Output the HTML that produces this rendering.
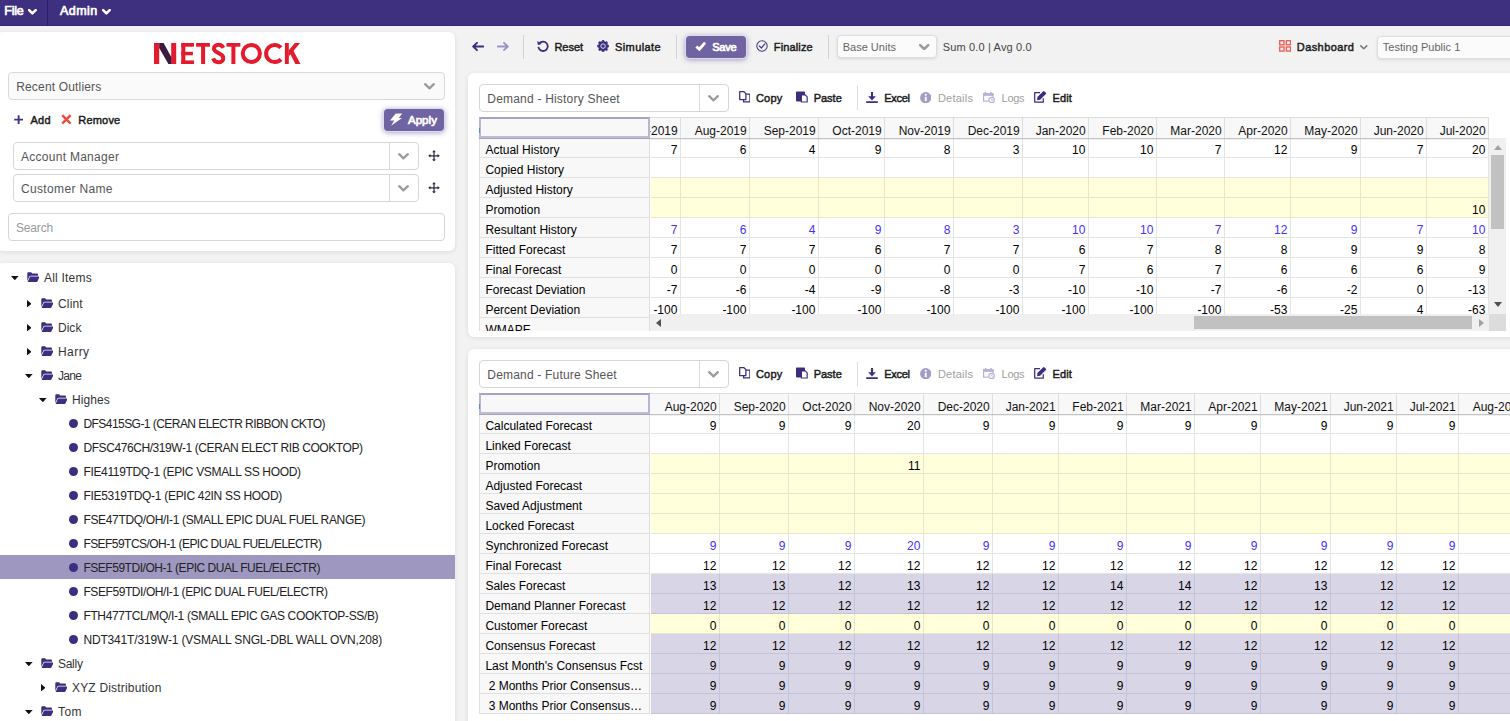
<!DOCTYPE html>
<html><head><meta charset="utf-8"><title>Netstock</title><style>
html,body{margin:0;padding:0}
body{width:1510px;height:721px;overflow:hidden;background:#f2f2f2;position:relative;font-family:"Liberation Sans",sans-serif;}
.b{position:absolute;box-sizing:border-box}
.t{position:absolute;white-space:pre;}
.panel{background:#fff;border-radius:6px;box-shadow:0 1px 5px rgba(0,0,0,0.09)}
.inp{background:#fff;border:1px solid #d6d6d6;border-radius:4px}
.btn{background:#6f63a2;border-radius:4px;box-shadow:0 0 0 1px #e0dde9,0 1px 5px 1px rgba(90,75,160,0.5)}
</style></head><body>
<div class="b " style="left:0px;top:0px;width:1510px;height:26px;background:#3e2f7f;border-bottom:1px solid #37287b"></div>
<div class="b " style="left:47px;top:0px;width:1px;height:26px;background:#2b1d68"></div>
<span id="t1" class="t " style="left:4.3px;top:1.97px;font-size:12.5px;line-height:19px;color:#fff;-webkit-text-stroke:0.7px #fff;letter-spacing:-0.219px;">File</span>
<span id="t2" class="t " style="left:60.1px;top:1.97px;font-size:12.5px;line-height:19px;color:#fff;-webkit-text-stroke:0.7px #fff;letter-spacing:0.441px;">Admin</span>
<svg class="b" style="left:28.2px;top:9px;" width="8.8" height="5.9" viewBox="0 0 10 6.5"><path d="M1.3 1.2 L5 4.9 L8.7 1.2" fill="none" stroke="#fff" stroke-width="2.9" stroke-linecap="round" stroke-linejoin="round"/></svg>
<svg class="b" style="left:102px;top:9px;" width="8.8" height="5.9" viewBox="0 0 10 6.5"><path d="M1.3 1.2 L5 4.9 L8.7 1.2" fill="none" stroke="#fff" stroke-width="2.9" stroke-linecap="round" stroke-linejoin="round"/></svg>
<div class="b panel" style="left:-3px;top:32px;width:458px;height:219px;"></div>
<svg class="b" style="left:150px;top:38px;" width="160" height="30" viewBox="150 38 160 30"><g fill="#e31b2d"><rect x="154" y="43" width="5.2" height="21"/><rect x="171.2" y="43" width="5" height="21"/><rect x="181.3" y="43" width="4" height="21"/><rect x="181.3" y="43" width="12.7" height="3.7"/><rect x="181.3" y="51.8" width="11.6" height="3.5"/><rect x="181.3" y="60.4" width="12.7" height="3.6"/><rect x="196.1" y="43" width="13.8" height="3.7"/><rect x="201.1" y="43" width="4" height="21"/><rect x="226.5" y="43" width="13.9" height="3.7"/><rect x="231.4" y="43" width="4" height="21"/><rect x="284.9" y="43" width="3.9" height="21"/><path d="M294.8 43 H300.1 L290.4 54.6 L288.6 56.4 V50.4 Z"/><path d="M290 53.4 L293 50 L300.5 64 H295.4 Z"/></g><path d="M159.2 43 H163.6 L171.4 57.2 V64 H168.4 L159.2 48 Z" fill="#3c1a3f"/><g fill="none" stroke="#e31b2d" stroke-width="4"><path d="M223.3 47.9 C 222.3 45.9, 220.7 44.8, 218.6 44.8 C 215.8 44.8, 213.9 46.4, 213.9 48.6 C 213.9 51, 216 52, 218.6 53.1 C 221.4 54.3, 223.3 55.6, 223.3 58.2 C 223.3 60.6, 221.2 62.2, 218.4 62.2 C 215.7 62.2, 213.9 60.9, 213.1 58.4"/><circle cx="251.35" cy="53.45" r="8.55"/><path d="M280.9 47.6 A8.55 8.55 0 1 0 280.9 59.3"/></g></svg>
<div class="b " style="left:8px;top:72px;width:437px;height:28px;background:#fafafa;border:1px solid #d9d9d9;border-radius:4px"></div>
<span id="t3" class="t " style="left:16.2px;top:78.03px;font-size:12px;line-height:18px;color:#555;letter-spacing:0.171px;">Recent Outliers</span>
<svg class="b" style="left:424px;top:83.25px;" width="11" height="6.5" viewBox="0 0 11 6.5"><path d="M1.2 1.2 L5.5 5.3 L9.8 1.2" fill="none" stroke="#9b9b9b" stroke-width="2.3" stroke-linecap="round" stroke-linejoin="round"/></svg>
<svg class="b" style="left:13.9px;top:114.5px;" width="9.3" height="9.3" viewBox="0 0 9.3 9.3"><path d="M4.65 0.2 V9.1 M0.2 4.65 H9.1" stroke="#42328a" stroke-width="1.9" fill="none"/></svg>
<span id="t4" class="t " style="left:30.4px;top:112.36px;font-size:11px;line-height:16px;color:#1a1a1a;-webkit-text-stroke:0.45px #1a1a1a;letter-spacing:0.311px;">Add</span>
<svg class="b" style="left:61px;top:113.6px;" width="10.8" height="10.8" viewBox="0 0 10.8 10.8"><path d="M1.2 1.2 L9.6 9.6 M9.6 1.2 L1.2 9.6" stroke="#e9503f" stroke-width="2.5" fill="none"/></svg>
<span id="t5" class="t " style="left:78.3px;top:112.36px;font-size:11px;line-height:16px;color:#1a1a1a;-webkit-text-stroke:0.45px #1a1a1a;letter-spacing:0.186px;">Remove</span>
<div class="b btn" style="left:384px;top:109px;width:60px;height:22px;"></div>
<svg class="b" style="left:390px;top:112.5px;" width="12.5" height="13.2" viewBox="0 0 12.5 13.2"><path d="M5.7 0.4 L12.2 0.4 L8.9 4.9 L12 4.9 L1.1 12.8 L4.2 7.6 L0 7.6 Z" fill="#fff"/></svg>
<span id="t6" class="t " style="left:407.9px;top:111.70px;font-size:11.5px;line-height:17px;color:#fff;-webkit-text-stroke:0.7px #fff;letter-spacing:0.080px;">Apply</span>
<div class="b inp" style="left:13px;top:142px;width:406px;height:28px;"></div>
<div class="b " style="left:389px;top:143px;width:1px;height:26px;background:#d9d9d9"></div>
<span id="t7" class="t " style="left:21px;top:148.03px;font-size:12px;line-height:18px;color:#555;letter-spacing:0.274px;">Account Manager</span>
<svg class="b" style="left:398.3px;top:153.05px;" width="11" height="6.5" viewBox="0 0 11 6.5"><path d="M1.2 1.2 L5.5 5.3 L9.8 1.2" fill="none" stroke="#9b9b9b" stroke-width="2.3" stroke-linecap="round" stroke-linejoin="round"/></svg>
<svg class="b" style="left:428px;top:149.8px;" width="12" height="11.6" viewBox="0 0 13 13"><path d="M6.5 1.4 V11.6 M1.4 6.5 H11.6" stroke="#2a2a3a" stroke-width="1.35" fill="none"/><path d="M6.5 0 L8.5 2.5 H4.5 Z M6.5 13 L8.5 10.5 H4.5 Z M0 6.5 L2.5 4.5 V8.5 Z M13 6.5 L10.5 4.5 V8.5 Z" fill="#2a2a3a"/></svg>
<div class="b inp" style="left:13px;top:174px;width:406px;height:28px;"></div>
<div class="b " style="left:389px;top:175px;width:1px;height:26px;background:#d9d9d9"></div>
<span id="t8" class="t " style="left:21px;top:180.03px;font-size:12px;line-height:18px;color:#555;letter-spacing:0.345px;">Customer Name</span>
<svg class="b" style="left:398.3px;top:185.05px;" width="11" height="6.5" viewBox="0 0 11 6.5"><path d="M1.2 1.2 L5.5 5.3 L9.8 1.2" fill="none" stroke="#9b9b9b" stroke-width="2.3" stroke-linecap="round" stroke-linejoin="round"/></svg>
<svg class="b" style="left:428px;top:181.8px;" width="12" height="11.6" viewBox="0 0 13 13"><path d="M6.5 1.4 V11.6 M1.4 6.5 H11.6" stroke="#2a2a3a" stroke-width="1.35" fill="none"/><path d="M6.5 0 L8.5 2.5 H4.5 Z M6.5 13 L8.5 10.5 H4.5 Z M0 6.5 L2.5 4.5 V8.5 Z M13 6.5 L10.5 4.5 V8.5 Z" fill="#2a2a3a"/></svg>
<div class="b inp" style="left:8px;top:213px;width:437px;height:28px;"></div>
<span id="t9" class="t " style="left:16px;top:218.83px;font-size:12px;line-height:18px;color:#9a9a9a;letter-spacing:-0.166px;">Search</span>
<div class="b panel" style="left:-3px;top:263px;width:458px;height:470px;"></div>
<div class="b " style="left:0px;top:555px;width:455px;height:24px;background:#9e97c0"></div>
<svg class="b" style="left:11px;top:275.9px;" width="7.6" height="4.3" viewBox="0 0 7.6 4.3"><path d="M0 0 H7.6 L3.8 4.3 Z" fill="#111"/></svg>
<svg class="b" style="left:26.6px;top:271.9px;" width="12.6" height="10.2" viewBox="0 0 12.6 10.2"><path d="M0.3 9 V1.3 Q0.3 0.3 1.3 0.3 H4.2 L5.2 1.6 H10 Q11 1.6 11 2.6 V3.8 H3.5 Q2.6 3.8 2.2 4.7 Z" fill="#3d2d7f"/><path d="M3 4.6 H11.9 Q12.6 4.6 12.3 5.3 L10.5 9.3 Q10.2 9.9 9.5 9.9 H0.6 Z" fill="#3d2d7f"/></svg>
<span id="t10" class="t " style="left:44px;top:268.53px;font-size:12px;line-height:18px;color:#333;letter-spacing:0.211px;">All Items</span>
<svg class="b" style="left:26.6px;top:299.7px;" width="4.6" height="7.4" viewBox="0 0 4.6 7.4"><path d="M0 0 V7.4 L4.6 3.7 Z" fill="#111"/></svg>
<svg class="b" style="left:40.6px;top:297.9px;" width="12.6" height="10.2" viewBox="0 0 12.6 10.2"><path d="M0.3 9 V1.3 Q0.3 0.3 1.3 0.3 H4.2 L5.2 1.6 H10 Q11 1.6 11 2.6 V3.8 H3.5 Q2.6 3.8 2.2 4.7 Z" fill="#3d2d7f"/><path d="M3 4.6 H11.9 Q12.6 4.6 12.3 5.3 L10.5 9.3 Q10.2 9.9 9.5 9.9 H0.6 Z" fill="#3d2d7f"/></svg>
<span id="t11" class="t " style="left:58px;top:294.53px;font-size:12px;line-height:18px;color:#333;letter-spacing:0.171px;">Clint</span>
<svg class="b" style="left:26.6px;top:323.8px;" width="4.6" height="7.4" viewBox="0 0 4.6 7.4"><path d="M0 0 V7.4 L4.6 3.7 Z" fill="#111"/></svg>
<svg class="b" style="left:40.6px;top:322px;" width="12.6" height="10.2" viewBox="0 0 12.6 10.2"><path d="M0.3 9 V1.3 Q0.3 0.3 1.3 0.3 H4.2 L5.2 1.6 H10 Q11 1.6 11 2.6 V3.8 H3.5 Q2.6 3.8 2.2 4.7 Z" fill="#3d2d7f"/><path d="M3 4.6 H11.9 Q12.6 4.6 12.3 5.3 L10.5 9.3 Q10.2 9.9 9.5 9.9 H0.6 Z" fill="#3d2d7f"/></svg>
<span id="t12" class="t " style="left:58px;top:318.63px;font-size:12px;line-height:18px;color:#333;letter-spacing:0.019px;">Dick</span>
<svg class="b" style="left:26.6px;top:347.9px;" width="4.6" height="7.4" viewBox="0 0 4.6 7.4"><path d="M0 0 V7.4 L4.6 3.7 Z" fill="#111"/></svg>
<svg class="b" style="left:40.6px;top:346.1px;" width="12.6" height="10.2" viewBox="0 0 12.6 10.2"><path d="M0.3 9 V1.3 Q0.3 0.3 1.3 0.3 H4.2 L5.2 1.6 H10 Q11 1.6 11 2.6 V3.8 H3.5 Q2.6 3.8 2.2 4.7 Z" fill="#3d2d7f"/><path d="M3 4.6 H11.9 Q12.6 4.6 12.3 5.3 L10.5 9.3 Q10.2 9.9 9.5 9.9 H0.6 Z" fill="#3d2d7f"/></svg>
<span id="t13" class="t " style="left:58px;top:342.73px;font-size:12px;line-height:18px;color:#333;letter-spacing:0.439px;">Harry</span>
<svg class="b" style="left:25px;top:374.1px;" width="7.6" height="4.3" viewBox="0 0 7.6 4.3"><path d="M0 0 H7.6 L3.8 4.3 Z" fill="#111"/></svg>
<svg class="b" style="left:40.6px;top:370.1px;" width="12.6" height="10.2" viewBox="0 0 12.6 10.2"><path d="M0.3 9 V1.3 Q0.3 0.3 1.3 0.3 H4.2 L5.2 1.6 H10 Q11 1.6 11 2.6 V3.8 H3.5 Q2.6 3.8 2.2 4.7 Z" fill="#3d2d7f"/><path d="M3 4.6 H11.9 Q12.6 4.6 12.3 5.3 L10.5 9.3 Q10.2 9.9 9.5 9.9 H0.6 Z" fill="#3d2d7f"/></svg>
<span id="t14" class="t " style="left:58px;top:366.73px;font-size:12px;line-height:18px;color:#333;letter-spacing:-0.677px;">Jane</span>
<svg class="b" style="left:39px;top:398.1px;" width="7.6" height="4.3" viewBox="0 0 7.6 4.3"><path d="M0 0 H7.6 L3.8 4.3 Z" fill="#111"/></svg>
<svg class="b" style="left:54.6px;top:394.1px;" width="12.6" height="10.2" viewBox="0 0 12.6 10.2"><path d="M0.3 9 V1.3 Q0.3 0.3 1.3 0.3 H4.2 L5.2 1.6 H10 Q11 1.6 11 2.6 V3.8 H3.5 Q2.6 3.8 2.2 4.7 Z" fill="#3d2d7f"/><path d="M3 4.6 H11.9 Q12.6 4.6 12.3 5.3 L10.5 9.3 Q10.2 9.9 9.5 9.9 H0.6 Z" fill="#3d2d7f"/></svg>
<span id="t15" class="t " style="left:72px;top:390.73px;font-size:12px;line-height:18px;color:#333;letter-spacing:0.088px;">Highes</span>
<div class="b " style="left:69.1px;top:419.4px;width:9px;height:9px;background:#3d2d7f;border-radius:50%"></div>
<span id="t16" class="t " style="left:83.4px;top:414.73px;font-size:12px;line-height:18px;color:#222;letter-spacing:-0.546px;">DFS415SG-1 (CERAN ELECTR RIBBON CKTO)</span>
<div class="b " style="left:69.1px;top:443.4px;width:9px;height:9px;background:#3d2d7f;border-radius:50%"></div>
<span id="t17" class="t " style="left:83.4px;top:438.73px;font-size:12px;line-height:18px;color:#222;letter-spacing:-0.418px;">DFSC476CH/319W-1 (CERAN ELECT RIB COOKTOP)</span>
<div class="b " style="left:69.1px;top:467.4px;width:9px;height:9px;background:#3d2d7f;border-radius:50%"></div>
<span id="t18" class="t " style="left:83.4px;top:462.73px;font-size:12px;line-height:18px;color:#222;letter-spacing:-0.337px;">FIE4119TDQ-1 (EPIC VSMALL SS HOOD)</span>
<div class="b " style="left:69.1px;top:491.4px;width:9px;height:9px;background:#3d2d7f;border-radius:50%"></div>
<span id="t19" class="t " style="left:83.4px;top:486.73px;font-size:12px;line-height:18px;color:#222;letter-spacing:-0.296px;">FIE5319TDQ-1 (EPIC 42IN SS HOOD)</span>
<div class="b " style="left:69.1px;top:515.4px;width:9px;height:9px;background:#3d2d7f;border-radius:50%"></div>
<span id="t20" class="t " style="left:83.4px;top:510.73px;font-size:12px;line-height:18px;color:#222;letter-spacing:-0.338px;">FSE47TDQ/OH/I-1 (SMALL EPIC DUAL FUEL RANGE)</span>
<div class="b " style="left:69.1px;top:539.4px;width:9px;height:9px;background:#3d2d7f;border-radius:50%"></div>
<span id="t21" class="t " style="left:83.4px;top:534.73px;font-size:12px;line-height:18px;color:#222;letter-spacing:-0.550px;">FSEF59TCS/OH-1 (EPIC DUAL FUEL/ELECTR)</span>
<div class="b " style="left:69.1px;top:563.4px;width:9px;height:9px;background:#3d2d7f;border-radius:50%"></div>
<span id="t22" class="t " style="left:83.4px;top:558.73px;font-size:12px;line-height:18px;color:#222;letter-spacing:-0.467px;">FSEF59TDI/OH-1 (EPIC DUAL FUEL/ELECTR)</span>
<div class="b " style="left:69.1px;top:587.4px;width:9px;height:9px;background:#3d2d7f;border-radius:50%"></div>
<span id="t23" class="t " style="left:83.4px;top:582.73px;font-size:12px;line-height:18px;color:#222;letter-spacing:-0.419px;">FSEF59TDI/OH/I-1 (EPIC DUAL FUEL/ELECTR)</span>
<div class="b " style="left:69.1px;top:611.4px;width:9px;height:9px;background:#3d2d7f;border-radius:50%"></div>
<span id="t24" class="t " style="left:83.4px;top:606.73px;font-size:12px;line-height:18px;color:#222;letter-spacing:-0.345px;">FTH477TCL/MQ/I-1 (SMALL EPIC GAS COOKTOP-SS/B)</span>
<div class="b " style="left:69.1px;top:635.4px;width:9px;height:9px;background:#3d2d7f;border-radius:50%"></div>
<span id="t25" class="t " style="left:83.4px;top:630.73px;font-size:12px;line-height:18px;color:#222;letter-spacing:-0.164px;">NDT341T/319W-1 (VSMALL SNGL-DBL WALL OVN,208)</span>
<svg class="b" style="left:25px;top:662.1px;" width="7.6" height="4.3" viewBox="0 0 7.6 4.3"><path d="M0 0 H7.6 L3.8 4.3 Z" fill="#111"/></svg>
<svg class="b" style="left:40.6px;top:658.1px;" width="12.6" height="10.2" viewBox="0 0 12.6 10.2"><path d="M0.3 9 V1.3 Q0.3 0.3 1.3 0.3 H4.2 L5.2 1.6 H10 Q11 1.6 11 2.6 V3.8 H3.5 Q2.6 3.8 2.2 4.7 Z" fill="#3d2d7f"/><path d="M3 4.6 H11.9 Q12.6 4.6 12.3 5.3 L10.5 9.3 Q10.2 9.9 9.5 9.9 H0.6 Z" fill="#3d2d7f"/></svg>
<span id="t26" class="t " style="left:58px;top:654.73px;font-size:12px;line-height:18px;color:#333;letter-spacing:-0.279px;">Sally</span>
<svg class="b" style="left:40.6px;top:683.9px;" width="4.6" height="7.4" viewBox="0 0 4.6 7.4"><path d="M0 0 V7.4 L4.6 3.7 Z" fill="#111"/></svg>
<svg class="b" style="left:54.6px;top:682.1px;" width="12.6" height="10.2" viewBox="0 0 12.6 10.2"><path d="M0.3 9 V1.3 Q0.3 0.3 1.3 0.3 H4.2 L5.2 1.6 H10 Q11 1.6 11 2.6 V3.8 H3.5 Q2.6 3.8 2.2 4.7 Z" fill="#3d2d7f"/><path d="M3 4.6 H11.9 Q12.6 4.6 12.3 5.3 L10.5 9.3 Q10.2 9.9 9.5 9.9 H0.6 Z" fill="#3d2d7f"/></svg>
<span id="t27" class="t " style="left:72px;top:678.73px;font-size:12px;line-height:18px;color:#333;letter-spacing:0.180px;">XYZ Distribution</span>
<svg class="b" style="left:25px;top:710.1px;" width="7.6" height="4.3" viewBox="0 0 7.6 4.3"><path d="M0 0 H7.6 L3.8 4.3 Z" fill="#111"/></svg>
<svg class="b" style="left:40.6px;top:706.1px;" width="12.6" height="10.2" viewBox="0 0 12.6 10.2"><path d="M0.3 9 V1.3 Q0.3 0.3 1.3 0.3 H4.2 L5.2 1.6 H10 Q11 1.6 11 2.6 V3.8 H3.5 Q2.6 3.8 2.2 4.7 Z" fill="#3d2d7f"/><path d="M3 4.6 H11.9 Q12.6 4.6 12.3 5.3 L10.5 9.3 Q10.2 9.9 9.5 9.9 H0.6 Z" fill="#3d2d7f"/></svg>
<span id="t28" class="t " style="left:58px;top:702.73px;font-size:12px;line-height:18px;color:#333;letter-spacing:0.464px;">Tom</span>
<svg class="b" style="left:471.8px;top:41.7px;" width="12" height="9" viewBox="0 0 12 9"><path d="M11.3 4.5 H1.6 M5 0.9 L1.2 4.5 L5 8.1" fill="none" stroke="#3d2d7f" stroke-width="1.9" stroke-linecap="round" stroke-linejoin="round"/></svg>
<svg class="b" style="left:496.5px;top:41.7px;" width="12" height="9" viewBox="0 0 12 9"><path transform="translate(12,0) scale(-1,1)" d="M11.3 4.5 H1.6 M5 0.9 L1.2 4.5 L5 8.1" fill="none" stroke="#9d93c4" stroke-width="1.9" stroke-linecap="round" stroke-linejoin="round"/></svg>
<div class="b " style="left:523px;top:35px;width:1px;height:24px;background:#d2d2d2"></div>
<svg class="b" style="left:536.5px;top:40.3px;" width="12" height="11.6" viewBox="0 0 12 11.6"><path d="M2.3 3.4 A4.7 4.7 0 1 1 1.5 7.6" fill="none" stroke="#3d2d7f" stroke-width="1.8" stroke-linecap="round"/><path d="M0.2 0.9 L0.9 4.9 L4.8 4.1 Z" fill="#3d2d7f"/></svg>
<span id="t29" class="t " style="left:554.4px;top:39.06px;font-size:11px;line-height:16px;color:#1a1a1a;-webkit-text-stroke:0.45px #1a1a1a;letter-spacing:0.013px;">Reset</span>
<svg class="b" style="left:596.9px;top:40.05px;" width="12.2" height="12.2" viewBox="0 0 12.2 12.2"><path d="M4.77 1.80 L5.41 0.34 L6.79 0.34 L7.43 1.80 L8.20 2.12 L9.68 1.54 L10.66 2.52 L10.08 4.00 L10.40 4.77 L11.86 5.41 L11.86 6.79 L10.40 7.43 L10.08 8.20 L10.66 9.68 L9.68 10.66 L8.20 10.08 L7.43 10.40 L6.79 11.86 L5.41 11.86 L4.77 10.40 L4.00 10.08 L2.52 10.66 L1.54 9.68 L2.12 8.20 L1.80 7.43 L0.34 6.79 L0.34 5.41 L1.80 4.77 L2.12 4.00 L1.54 2.52 L2.52 1.54 L4.00 2.12 Z" fill="#3d2d7f" stroke="#3d2d7f" stroke-width="0.6" stroke-linejoin="round"/><circle cx="6.1" cy="6.1" r="2.25" fill="#3d2d7f" stroke="#e9e6f2" stroke-width="0.95"/></svg>
<span id="t30" class="t " style="left:615px;top:39.06px;font-size:11px;line-height:16px;color:#1a1a1a;-webkit-text-stroke:0.45px #1a1a1a;letter-spacing:0.415px;">Simulate</span>
<div class="b " style="left:676px;top:35px;width:1px;height:24px;background:#d2d2d2"></div>
<div class="b btn" style="left:686px;top:36px;width:60px;height:22px;"></div>
<svg class="b" style="left:695px;top:41px;" width="11.5" height="10" viewBox="0 0 11.5 10"><path d="M1.3 5.4 L4.3 8.3 L10.2 1.6" fill="none" stroke="#fff" stroke-width="2.8" stroke-linecap="butt" stroke-linejoin="miter"/></svg>
<span id="t31" class="t " style="left:712.3px;top:39.06px;font-size:11px;line-height:16px;color:#fff;-webkit-text-stroke:0.7px #fff;letter-spacing:-0.259px;">Save</span>
<svg class="b" style="left:755.5px;top:40.3px;" width="12" height="12" viewBox="0 0 12 12"><circle cx="6" cy="6" r="5.2" fill="none" stroke="#4a3d8a" stroke-width="1.1"/><path d="M3.4 6 L5.4 8 L8.9 3.9" fill="none" stroke="#4a3d8a" stroke-width="1.2" stroke-linecap="round" stroke-linejoin="round"/></svg>
<span id="t32" class="t " style="left:773.8px;top:39.06px;font-size:11px;line-height:16px;color:#1a1a1a;-webkit-text-stroke:0.45px #1a1a1a;letter-spacing:0.142px;">Finalize</span>
<div class="b " style="left:828px;top:35px;width:1px;height:24px;background:#d2d2d2"></div>
<div class="b inp" style="left:837px;top:35px;width:100px;height:23px;background:#fbfbfb;border-color:#dedede;box-shadow:0 1px 3px rgba(0,0,0,0.12)"></div>
<span id="t33" class="t " style="left:842.7px;top:39.16px;font-size:11px;line-height:16px;color:#666;letter-spacing:0.011px;">Base Units</span>
<svg class="b" style="left:919.2px;top:44.1px;" width="10.4" height="6.2" viewBox="0 0 11 6.5"><path d="M1.2 1.2 L5.5 5.3 L9.8 1.2" fill="none" stroke="#9c9c9c" stroke-width="2.7" stroke-linecap="round" stroke-linejoin="round"/></svg>
<span id="t34" class="t " style="left:942.7px;top:39.16px;font-size:11px;line-height:16px;color:#444;letter-spacing:0.160px;">Sum 0.0 | Avg 0.0</span>
<svg class="b" style="left:1278.5px;top:40.1px;" width="12.4" height="11.8" viewBox="0 0 12.4 11.8"><rect x="0.7" y="0.7" width="4.3" height="4.1" fill="none" stroke="#ee5b57" stroke-width="1.35"/><rect x="0.7" y="7" width="4.3" height="4.1" fill="none" stroke="#ee5b57" stroke-width="1.35"/><rect x="7.3" y="0.7" width="4.3" height="4.1" fill="none" stroke="#ee5b57" stroke-width="1.35"/><rect x="7.3" y="7" width="4.3" height="4.1" fill="none" stroke="#ee5b57" stroke-width="1.35"/></svg>
<span id="t35" class="t " style="left:1296.8px;top:39.06px;font-size:11px;line-height:16px;color:#1a1a1a;-webkit-text-stroke:0.45px #1a1a1a;letter-spacing:0.421px;">Dashboard</span>
<svg class="b" style="left:1360.1px;top:45.3px;" width="7.6" height="4.6" viewBox="0 0 11 6.5"><path d="M1.2 1.2 L5.5 5.3 L9.8 1.2" fill="none" stroke="#7a7a7a" stroke-width="2.3" stroke-linecap="round" stroke-linejoin="round"/></svg>
<div class="b inp" style="left:1377px;top:35.5px;width:140px;height:23px;background:#fbfbfb;border-color:#dedede;box-shadow:0 1px 3px rgba(0,0,0,0.10)"></div>
<span id="t36" class="t " style="left:1382.8px;top:39.16px;font-size:11px;line-height:16px;color:#666;letter-spacing:0.030px;">Testing Public 1</span>
<div class="b panel" style="left:468px;top:73px;width:1060px;height:264px;"></div>
<div class="b inp" style="left:479px;top:84px;width:250px;height:28px;"></div>
<div class="b " style="left:699px;top:85px;width:1px;height:26px;background:#d9d9d9"></div>
<span id="t37" class="t " style="left:487.3px;top:89.73px;font-size:12px;line-height:18px;color:#555;letter-spacing:0.202px;">Demand - History Sheet</span>
<svg class="b" style="left:708.3px;top:95.25px;" width="11" height="6.5" viewBox="0 0 11 6.5"><path d="M1.2 1.2 L5.5 5.3 L9.8 1.2" fill="none" stroke="#9b9b9b" stroke-width="2.3" stroke-linecap="round" stroke-linejoin="round"/></svg>
<svg class="b" style="left:738.7px;top:91.3px;" width="11.6" height="11.6" viewBox="0 0 11.6 11.6"><path d="M4.6 8.6 V4.6 L6.2 3.1 H10.9 V11 H4.6 Z" fill="none" stroke="#3d2d7f" stroke-width="1.25" stroke-linejoin="round"/><path d="M0.7 0.7 H5 L6.9 2.6 V8.6 H0.7 Z" fill="#fff" stroke="#3d2d7f" stroke-width="1.25" stroke-linejoin="round"/></svg>
<span id="t38" class="t " style="left:756px;top:90.26px;font-size:11px;line-height:16px;color:#1a1a1a;-webkit-text-stroke:0.45px #1a1a1a;letter-spacing:0.171px;">Copy</span>
<svg class="b" style="left:796px;top:91.3px;" width="11.8" height="11.6" viewBox="0 0 11.8 11.6"><path d="M0 1.2 Q0 0.4 0.8 0.4 H8.2 Q9 0.4 9 1.2 V4 H5 V10.4 H0.8 Q0 10.4 0 9.6 Z" fill="#3d2d7f"/><path d="M5.4 3.9 H9.2 L11.2 5.9 V11 H5.4 Z" fill="#fff" stroke="#3d2d7f" stroke-width="1.2" stroke-linejoin="round"/></svg>
<span id="t39" class="t " style="left:813.7px;top:90.26px;font-size:11px;line-height:16px;color:#1a1a1a;-webkit-text-stroke:0.45px #1a1a1a;letter-spacing:-0.010px;">Paste</span>
<div class="b " style="left:857px;top:86px;width:1px;height:24px;background:#dcdcdc"></div>
<svg class="b" style="left:866px;top:91.7px;" width="12" height="11.2" viewBox="0 0 12 11.2"><path d="M6 0 V6" fill="none" stroke="#3d2d7f" stroke-width="2.1"/><path d="M2.2 4.3 H9.8 L6 8.4 Z" fill="#3d2d7f"/><path d="M0.2 10.2 H11.8" stroke="#3d2d7f" stroke-width="1.9"/></svg>
<span id="t40" class="t " style="left:884.3px;top:90.26px;font-size:11px;line-height:16px;color:#1a1a1a;-webkit-text-stroke:0.45px #1a1a1a;letter-spacing:-0.302px;">Excel</span>
<svg class="b" style="left:920px;top:91.8px;" width="11.4" height="11.4" viewBox="0 0 11.6 11.6"><circle cx="5.8" cy="5.8" r="5.7" fill="#a39bc8"/><rect x="4.9" y="4.8" width="1.9" height="4.5" fill="#fff"/><circle cx="5.85" cy="2.9" r="1.1" fill="#fff"/></svg>
<span id="t41" class="t " style="left:937.9px;top:90.26px;font-size:11px;line-height:16px;color:#a0a0a0;letter-spacing:0.246px;">Details</span>
<svg class="b" style="left:983.2px;top:91.6px;" width="11.8" height="11" viewBox="0 0 11.8 11"><path d="M0.6 2 V9.2 H5.6" fill="none" stroke="#b9b2d6" stroke-width="1.2"/><path d="M10 2 V5" fill="none" stroke="#b9b2d6" stroke-width="1.2"/><rect x="0" y="1" width="10.6" height="2.9" fill="#b9b2d6"/><rect x="1.8" y="0" width="1.5" height="2" fill="#b9b2d6"/><rect x="7.2" y="0" width="1.5" height="2" fill="#b9b2d6"/><circle cx="8.6" cy="8" r="2.7" fill="#fff" stroke="#b9b2d6" stroke-width="1.2"/><path d="M8.7 6.8 V8.2 H9.9" fill="none" stroke="#b9b2d6" stroke-width="0.9"/></svg>
<span id="t42" class="t " style="left:1001.6px;top:90.26px;font-size:11px;line-height:16px;color:#a0a0a0;letter-spacing:-0.320px;">Logs</span>
<svg class="b" style="left:1034.3px;top:91.1px;" width="12.4" height="11.8" viewBox="0 0 12.4 11.8"><path d="M9.3 7.2 V11.1 H0.7 V1.7 H6" fill="none" stroke="#3d2d7f" stroke-width="1.25" stroke-linejoin="round"/><path d="M3.4 6.1 L9.3 0.3 Q9.9 -0.2 10.5 0.4 L11.9 1.8 Q12.4 2.4 11.9 2.9 L6.1 8.8 L3.1 9.2 Z" fill="#3d2d7f"/></svg>
<span id="t43" class="t " style="left:1052.4px;top:90.26px;font-size:11px;line-height:16px;color:#1a1a1a;-webkit-text-stroke:0.45px #1a1a1a;letter-spacing:0.177px;">Edit</span>
<div class="b" style="left:479px;top:117px;width:1010px;height:214px;overflow:hidden">
<div class="b" style="left:0px;top:0px;width:1010px;height:21px;background:#f8f8f8"></div>
<div class="b" style="left:0px;top:21px;width:171px;height:200px;background:#f8f8f8"></div>
<div class="b" style="left:171px;top:21px;width:839px;height:200px;background:#fff"></div>
<div class="b" style="left:201px;top:21px;width:1px;height:40px;background:#e4e4e4"></div>
<div class="b" style="left:270px;top:21px;width:1px;height:40px;background:#e4e4e4"></div>
<div class="b" style="left:339px;top:21px;width:1px;height:40px;background:#e4e4e4"></div>
<div class="b" style="left:405px;top:21px;width:1px;height:40px;background:#e4e4e4"></div>
<div class="b" style="left:474px;top:21px;width:1px;height:40px;background:#e4e4e4"></div>
<div class="b" style="left:543px;top:21px;width:1px;height:40px;background:#e4e4e4"></div>
<div class="b" style="left:609px;top:21px;width:1px;height:40px;background:#e4e4e4"></div>
<div class="b" style="left:677px;top:21px;width:1px;height:40px;background:#e4e4e4"></div>
<div class="b" style="left:745px;top:21px;width:1px;height:40px;background:#e4e4e4"></div>
<div class="b" style="left:811px;top:21px;width:1px;height:40px;background:#e4e4e4"></div>
<div class="b" style="left:881px;top:21px;width:1px;height:40px;background:#e4e4e4"></div>
<div class="b" style="left:947px;top:21px;width:1px;height:40px;background:#e4e4e4"></div>
<div class="b" style="left:1009px;top:21px;width:1px;height:40px;background:#e4e4e4"></div>
<div class="b" style="left:172px;top:61px;width:838px;height:40px;background:#ffffdc"></div>
<div class="b" style="left:201px;top:61px;width:1px;height:40px;background:#e6e6c9"></div>
<div class="b" style="left:270px;top:61px;width:1px;height:40px;background:#e6e6c9"></div>
<div class="b" style="left:339px;top:61px;width:1px;height:40px;background:#e6e6c9"></div>
<div class="b" style="left:405px;top:61px;width:1px;height:40px;background:#e6e6c9"></div>
<div class="b" style="left:474px;top:61px;width:1px;height:40px;background:#e6e6c9"></div>
<div class="b" style="left:543px;top:61px;width:1px;height:40px;background:#e6e6c9"></div>
<div class="b" style="left:609px;top:61px;width:1px;height:40px;background:#e6e6c9"></div>
<div class="b" style="left:677px;top:61px;width:1px;height:40px;background:#e6e6c9"></div>
<div class="b" style="left:745px;top:61px;width:1px;height:40px;background:#e6e6c9"></div>
<div class="b" style="left:811px;top:61px;width:1px;height:40px;background:#e6e6c9"></div>
<div class="b" style="left:881px;top:61px;width:1px;height:40px;background:#e6e6c9"></div>
<div class="b" style="left:947px;top:61px;width:1px;height:40px;background:#e6e6c9"></div>
<div class="b" style="left:1009px;top:61px;width:1px;height:40px;background:#e6e6c9"></div>
<div class="b" style="left:201px;top:101px;width:1px;height:120px;background:#e4e4e4"></div>
<div class="b" style="left:270px;top:101px;width:1px;height:120px;background:#e4e4e4"></div>
<div class="b" style="left:339px;top:101px;width:1px;height:120px;background:#e4e4e4"></div>
<div class="b" style="left:405px;top:101px;width:1px;height:120px;background:#e4e4e4"></div>
<div class="b" style="left:474px;top:101px;width:1px;height:120px;background:#e4e4e4"></div>
<div class="b" style="left:543px;top:101px;width:1px;height:120px;background:#e4e4e4"></div>
<div class="b" style="left:609px;top:101px;width:1px;height:120px;background:#e4e4e4"></div>
<div class="b" style="left:677px;top:101px;width:1px;height:120px;background:#e4e4e4"></div>
<div class="b" style="left:745px;top:101px;width:1px;height:120px;background:#e4e4e4"></div>
<div class="b" style="left:811px;top:101px;width:1px;height:120px;background:#e4e4e4"></div>
<div class="b" style="left:881px;top:101px;width:1px;height:120px;background:#e4e4e4"></div>
<div class="b" style="left:947px;top:101px;width:1px;height:120px;background:#e4e4e4"></div>
<div class="b" style="left:1009px;top:101px;width:1px;height:120px;background:#e4e4e4"></div>
<div class="b" style="left:201px;top:0px;width:1px;height:21px;background:#dedede"></div>
<div class="b" style="left:270px;top:0px;width:1px;height:21px;background:#dedede"></div>
<div class="b" style="left:339px;top:0px;width:1px;height:21px;background:#dedede"></div>
<div class="b" style="left:405px;top:0px;width:1px;height:21px;background:#dedede"></div>
<div class="b" style="left:474px;top:0px;width:1px;height:21px;background:#dedede"></div>
<div class="b" style="left:543px;top:0px;width:1px;height:21px;background:#dedede"></div>
<div class="b" style="left:609px;top:0px;width:1px;height:21px;background:#dedede"></div>
<div class="b" style="left:677px;top:0px;width:1px;height:21px;background:#dedede"></div>
<div class="b" style="left:745px;top:0px;width:1px;height:21px;background:#dedede"></div>
<div class="b" style="left:811px;top:0px;width:1px;height:21px;background:#dedede"></div>
<div class="b" style="left:881px;top:0px;width:1px;height:21px;background:#dedede"></div>
<div class="b" style="left:947px;top:0px;width:1px;height:21px;background:#dedede"></div>
<div class="b" style="left:1009px;top:0px;width:1px;height:21px;background:#dedede"></div>
<div class="b" style="left:170px;top:0px;width:1px;height:221px;background:#dfdfdf"></div>
<div class="b" style="left:0px;top:0px;width:1px;height:221px;background:#dfdfdf"></div>
<div class="b" style="left:0px;top:0px;width:1010px;height:1px;background:#dedede"></div>
<div class="b" style="left:0px;top:40px;width:170px;height:1px;background:#e0e0e0"></div>
<div class="b" style="left:172px;top:40px;width:838px;height:1px;background:#e4e4e4"></div>
<div class="b" style="left:0px;top:60px;width:170px;height:1px;background:#e0e0e0"></div>
<div class="b" style="left:172px;top:60px;width:838px;height:1px;background:#e4e4e4"></div>
<div class="b" style="left:0px;top:80px;width:170px;height:1px;background:#e0e0e0"></div>
<div class="b" style="left:172px;top:80px;width:838px;height:1px;background:#e6e6c9"></div>
<div class="b" style="left:0px;top:100px;width:170px;height:1px;background:#e0e0e0"></div>
<div class="b" style="left:172px;top:100px;width:838px;height:1px;background:#e6e6c9"></div>
<div class="b" style="left:0px;top:120px;width:170px;height:1px;background:#e0e0e0"></div>
<div class="b" style="left:172px;top:120px;width:838px;height:1px;background:#e4e4e4"></div>
<div class="b" style="left:0px;top:140px;width:170px;height:1px;background:#e0e0e0"></div>
<div class="b" style="left:172px;top:140px;width:838px;height:1px;background:#e4e4e4"></div>
<div class="b" style="left:0px;top:160px;width:170px;height:1px;background:#e0e0e0"></div>
<div class="b" style="left:172px;top:160px;width:838px;height:1px;background:#e4e4e4"></div>
<div class="b" style="left:0px;top:180px;width:170px;height:1px;background:#e0e0e0"></div>
<div class="b" style="left:172px;top:180px;width:838px;height:1px;background:#e4e4e4"></div>
<div class="b" style="left:0px;top:200px;width:170px;height:1px;background:#e0e0e0"></div>
<div class="b" style="left:172px;top:200px;width:838px;height:1px;background:#e4e4e4"></div>
<div class="b" style="left:0px;top:220px;width:170px;height:1px;background:#e0e0e0"></div>
<div class="b" style="left:172px;top:220px;width:838px;height:1px;background:#e4e4e4"></div>
</div>
<div class="b " style="left:479px;top:117px;width:171px;height:21px;border:2px solid #bab5d6;border-top-color:#a8a2ca;border-bottom-color:#c0bbdb;background:#f8f8f8"></div>
<div class="b " style="left:479px;top:127.5px;width:1px;height:5.6px;background:#5d88d6"></div>
<div class="b " style="left:479px;top:138px;width:171px;height:1px;background:#a6a6a6"></div>
<div class="b " style="left:650px;top:138px;width:839px;height:1px;background:#c4c4c4"></div>
<div class="b " style="left:650px;top:139px;width:839px;height:1px;background:rgba(0,0,0,0.06)"></div>
<div class="b" style="left:479px;top:117px;width:170px;height:214px;overflow:hidden">
<span class="t" style="left:6.4px;top:24.03px;font-size:12px;line-height:18px;color:#000">Actual History</span>
<span class="t" style="left:6.4px;top:44.03px;font-size:12px;line-height:18px;color:#000">Copied History</span>
<span class="t" style="left:6.4px;top:64.03px;font-size:12px;line-height:18px;color:#000">Adjusted History</span>
<span class="t" style="left:6.4px;top:84.03px;font-size:12px;line-height:18px;color:#000">Promotion</span>
<span class="t" style="left:6.4px;top:104.03px;font-size:12px;line-height:18px;color:#000">Resultant History</span>
<span class="t" style="left:6.4px;top:124.03px;font-size:12px;line-height:18px;color:#000">Fitted Forecast</span>
<span class="t" style="left:6.4px;top:144.03px;font-size:12px;line-height:18px;color:#000">Final Forecast</span>
<span class="t" style="left:6.4px;top:164.03px;font-size:12px;line-height:18px;color:#000">Forecast Deviation</span>
<span class="t" style="left:6.4px;top:184.03px;font-size:12px;line-height:18px;color:#000">Percent Deviation</span>
<span class="t" style="left:6.4px;top:204.03px;font-size:12px;line-height:18px;color:#000">WMAPE</span>
</div>
<div class="b" style="left:650px;top:117px;width:860px;height:197px;overflow:hidden">
<span class="t" style="right:832.3px;top:5.03px;font-size:12px;line-height:18px;color:#111">Jul-2019</span>
<span class="t" style="right:763.3px;top:5.03px;font-size:12px;line-height:18px;color:#111">Aug-2019</span>
<span class="t" style="right:694.3px;top:5.03px;font-size:12px;line-height:18px;color:#111">Sep-2019</span>
<span class="t" style="right:628.3px;top:5.03px;font-size:12px;line-height:18px;color:#111">Oct-2019</span>
<span class="t" style="right:559.3px;top:5.03px;font-size:12px;line-height:18px;color:#111">Nov-2019</span>
<span class="t" style="right:490.3px;top:5.03px;font-size:12px;line-height:18px;color:#111">Dec-2019</span>
<span class="t" style="right:424.3px;top:5.03px;font-size:12px;line-height:18px;color:#111">Jan-2020</span>
<span class="t" style="right:356.3px;top:5.03px;font-size:12px;line-height:18px;color:#111">Feb-2020</span>
<span class="t" style="right:288.3px;top:5.03px;font-size:12px;line-height:18px;color:#111">Mar-2020</span>
<span class="t" style="right:222.3px;top:5.03px;font-size:12px;line-height:18px;color:#111">Apr-2020</span>
<span class="t" style="right:152.3px;top:5.03px;font-size:12px;line-height:18px;color:#111">May-2020</span>
<span class="t" style="right:86.3px;top:5.03px;font-size:12px;line-height:18px;color:#111">Jun-2020</span>
<span class="t" style="right:24.3px;top:5.03px;font-size:12px;line-height:18px;color:#111">Jul-2020</span>
<span class="t" style="right:832.6px;top:24.03px;font-size:12px;line-height:18px;color:#000">7</span>
<span class="t" style="right:763.6px;top:24.03px;font-size:12px;line-height:18px;color:#000">6</span>
<span class="t" style="right:694.6px;top:24.03px;font-size:12px;line-height:18px;color:#000">4</span>
<span class="t" style="right:628.6px;top:24.03px;font-size:12px;line-height:18px;color:#000">9</span>
<span class="t" style="right:559.6px;top:24.03px;font-size:12px;line-height:18px;color:#000">8</span>
<span class="t" style="right:490.6px;top:24.03px;font-size:12px;line-height:18px;color:#000">3</span>
<span class="t" style="right:424.6px;top:24.03px;font-size:12px;line-height:18px;color:#000">10</span>
<span class="t" style="right:356.6px;top:24.03px;font-size:12px;line-height:18px;color:#000">10</span>
<span class="t" style="right:288.6px;top:24.03px;font-size:12px;line-height:18px;color:#000">7</span>
<span class="t" style="right:222.6px;top:24.03px;font-size:12px;line-height:18px;color:#000">12</span>
<span class="t" style="right:152.6px;top:24.03px;font-size:12px;line-height:18px;color:#000">9</span>
<span class="t" style="right:86.6px;top:24.03px;font-size:12px;line-height:18px;color:#000">7</span>
<span class="t" style="right:24.6px;top:24.03px;font-size:12px;line-height:18px;color:#000">20</span>
<span class="t" style="right:24.6px;top:84.03px;font-size:12px;line-height:18px;color:#000">10</span>
<span class="t" style="right:832.6px;top:104.03px;font-size:12px;line-height:18px;color:#4630fa">7</span>
<span class="t" style="right:763.6px;top:104.03px;font-size:12px;line-height:18px;color:#4630fa">6</span>
<span class="t" style="right:694.6px;top:104.03px;font-size:12px;line-height:18px;color:#4630fa">4</span>
<span class="t" style="right:628.6px;top:104.03px;font-size:12px;line-height:18px;color:#4630fa">9</span>
<span class="t" style="right:559.6px;top:104.03px;font-size:12px;line-height:18px;color:#4630fa">8</span>
<span class="t" style="right:490.6px;top:104.03px;font-size:12px;line-height:18px;color:#4630fa">3</span>
<span class="t" style="right:424.6px;top:104.03px;font-size:12px;line-height:18px;color:#4630fa">10</span>
<span class="t" style="right:356.6px;top:104.03px;font-size:12px;line-height:18px;color:#4630fa">10</span>
<span class="t" style="right:288.6px;top:104.03px;font-size:12px;line-height:18px;color:#4630fa">7</span>
<span class="t" style="right:222.6px;top:104.03px;font-size:12px;line-height:18px;color:#4630fa">12</span>
<span class="t" style="right:152.6px;top:104.03px;font-size:12px;line-height:18px;color:#4630fa">9</span>
<span class="t" style="right:86.6px;top:104.03px;font-size:12px;line-height:18px;color:#4630fa">7</span>
<span class="t" style="right:24.6px;top:104.03px;font-size:12px;line-height:18px;color:#4630fa">10</span>
<span class="t" style="right:832.6px;top:124.03px;font-size:12px;line-height:18px;color:#000">7</span>
<span class="t" style="right:763.6px;top:124.03px;font-size:12px;line-height:18px;color:#000">7</span>
<span class="t" style="right:694.6px;top:124.03px;font-size:12px;line-height:18px;color:#000">7</span>
<span class="t" style="right:628.6px;top:124.03px;font-size:12px;line-height:18px;color:#000">6</span>
<span class="t" style="right:559.6px;top:124.03px;font-size:12px;line-height:18px;color:#000">7</span>
<span class="t" style="right:490.6px;top:124.03px;font-size:12px;line-height:18px;color:#000">7</span>
<span class="t" style="right:424.6px;top:124.03px;font-size:12px;line-height:18px;color:#000">6</span>
<span class="t" style="right:356.6px;top:124.03px;font-size:12px;line-height:18px;color:#000">7</span>
<span class="t" style="right:288.6px;top:124.03px;font-size:12px;line-height:18px;color:#000">8</span>
<span class="t" style="right:222.6px;top:124.03px;font-size:12px;line-height:18px;color:#000">8</span>
<span class="t" style="right:152.6px;top:124.03px;font-size:12px;line-height:18px;color:#000">9</span>
<span class="t" style="right:86.6px;top:124.03px;font-size:12px;line-height:18px;color:#000">9</span>
<span class="t" style="right:24.6px;top:124.03px;font-size:12px;line-height:18px;color:#000">8</span>
<span class="t" style="right:832.6px;top:144.03px;font-size:12px;line-height:18px;color:#000">0</span>
<span class="t" style="right:763.6px;top:144.03px;font-size:12px;line-height:18px;color:#000">0</span>
<span class="t" style="right:694.6px;top:144.03px;font-size:12px;line-height:18px;color:#000">0</span>
<span class="t" style="right:628.6px;top:144.03px;font-size:12px;line-height:18px;color:#000">0</span>
<span class="t" style="right:559.6px;top:144.03px;font-size:12px;line-height:18px;color:#000">0</span>
<span class="t" style="right:490.6px;top:144.03px;font-size:12px;line-height:18px;color:#000">0</span>
<span class="t" style="right:424.6px;top:144.03px;font-size:12px;line-height:18px;color:#000">7</span>
<span class="t" style="right:356.6px;top:144.03px;font-size:12px;line-height:18px;color:#000">6</span>
<span class="t" style="right:288.6px;top:144.03px;font-size:12px;line-height:18px;color:#000">7</span>
<span class="t" style="right:222.6px;top:144.03px;font-size:12px;line-height:18px;color:#000">6</span>
<span class="t" style="right:152.6px;top:144.03px;font-size:12px;line-height:18px;color:#000">6</span>
<span class="t" style="right:86.6px;top:144.03px;font-size:12px;line-height:18px;color:#000">6</span>
<span class="t" style="right:24.6px;top:144.03px;font-size:12px;line-height:18px;color:#000">9</span>
<span class="t" style="right:832.6px;top:164.03px;font-size:12px;line-height:18px;color:#000">-7</span>
<span class="t" style="right:763.6px;top:164.03px;font-size:12px;line-height:18px;color:#000">-6</span>
<span class="t" style="right:694.6px;top:164.03px;font-size:12px;line-height:18px;color:#000">-4</span>
<span class="t" style="right:628.6px;top:164.03px;font-size:12px;line-height:18px;color:#000">-9</span>
<span class="t" style="right:559.6px;top:164.03px;font-size:12px;line-height:18px;color:#000">-8</span>
<span class="t" style="right:490.6px;top:164.03px;font-size:12px;line-height:18px;color:#000">-3</span>
<span class="t" style="right:424.6px;top:164.03px;font-size:12px;line-height:18px;color:#000">-10</span>
<span class="t" style="right:356.6px;top:164.03px;font-size:12px;line-height:18px;color:#000">-10</span>
<span class="t" style="right:288.6px;top:164.03px;font-size:12px;line-height:18px;color:#000">-7</span>
<span class="t" style="right:222.6px;top:164.03px;font-size:12px;line-height:18px;color:#000">-6</span>
<span class="t" style="right:152.6px;top:164.03px;font-size:12px;line-height:18px;color:#000">-2</span>
<span class="t" style="right:86.6px;top:164.03px;font-size:12px;line-height:18px;color:#000">0</span>
<span class="t" style="right:24.6px;top:164.03px;font-size:12px;line-height:18px;color:#000">-13</span>
<span class="t" style="right:832.6px;top:184.03px;font-size:12px;line-height:18px;color:#000">-100</span>
<span class="t" style="right:763.6px;top:184.03px;font-size:12px;line-height:18px;color:#000">-100</span>
<span class="t" style="right:694.6px;top:184.03px;font-size:12px;line-height:18px;color:#000">-100</span>
<span class="t" style="right:628.6px;top:184.03px;font-size:12px;line-height:18px;color:#000">-100</span>
<span class="t" style="right:559.6px;top:184.03px;font-size:12px;line-height:18px;color:#000">-100</span>
<span class="t" style="right:490.6px;top:184.03px;font-size:12px;line-height:18px;color:#000">-100</span>
<span class="t" style="right:424.6px;top:184.03px;font-size:12px;line-height:18px;color:#000">-100</span>
<span class="t" style="right:356.6px;top:184.03px;font-size:12px;line-height:18px;color:#000">-100</span>
<span class="t" style="right:288.6px;top:184.03px;font-size:12px;line-height:18px;color:#000">-100</span>
<span class="t" style="right:222.6px;top:184.03px;font-size:12px;line-height:18px;color:#000">-53</span>
<span class="t" style="right:152.6px;top:184.03px;font-size:12px;line-height:18px;color:#000">-25</span>
<span class="t" style="right:86.6px;top:184.03px;font-size:12px;line-height:18px;color:#000">4</span>
<span class="t" style="right:24.6px;top:184.03px;font-size:12px;line-height:18px;color:#000">-63</span>
</div>
<div class="b " style="left:650px;top:314px;width:839px;height:17px;background:#f0f0f0"></div>
<div class="b " style="left:1194px;top:316px;width:278px;height:13px;background:#c1c1c1"></div>
<svg class="b" style="left:656.3px;top:318.5px;" width="5" height="8" viewBox="0 0 5 8"><path d="M5 0 V8 L0 4 Z" fill="#505050"/></svg>
<svg class="b" style="left:1479px;top:318.5px;" width="5" height="8" viewBox="0 0 5 8"><path d="M0 0 V8 L5 4 Z" fill="#a3a3a3"/></svg>
<div class="b " style="left:1489px;top:138px;width:17px;height:176px;background:#f0f0f0"></div>
<div class="b " style="left:1491px;top:155px;width:13px;height:74px;background:#c1c1c1"></div>
<svg class="b" style="left:1493.5px;top:145px;" width="8" height="5" viewBox="0 0 8 5"><path d="M0 5 H8 L4 0 Z" fill="#a3a3a3"/></svg>
<svg class="b" style="left:1493.5px;top:302px;" width="8" height="5" viewBox="0 0 8 5"><path d="M0 0 H8 L4 5 Z" fill="#505050"/></svg>
<div class="b " style="left:1489px;top:314px;width:17px;height:17px;background:#dcdcdc"></div>
<div class="b panel" style="left:468px;top:349px;width:1060px;height:400px;"></div>
<div class="b inp" style="left:479px;top:360px;width:250px;height:28px;"></div>
<div class="b " style="left:699px;top:361px;width:1px;height:26px;background:#d9d9d9"></div>
<span id="t44" class="t " style="left:487.3px;top:365.73px;font-size:12px;line-height:18px;color:#555;letter-spacing:0.195px;">Demand - Future Sheet</span>
<svg class="b" style="left:708.3px;top:371.25px;" width="11" height="6.5" viewBox="0 0 11 6.5"><path d="M1.2 1.2 L5.5 5.3 L9.8 1.2" fill="none" stroke="#9b9b9b" stroke-width="2.3" stroke-linecap="round" stroke-linejoin="round"/></svg>
<svg class="b" style="left:738.7px;top:367.3px;" width="11.6" height="11.6" viewBox="0 0 11.6 11.6"><path d="M4.6 8.6 V4.6 L6.2 3.1 H10.9 V11 H4.6 Z" fill="none" stroke="#3d2d7f" stroke-width="1.25" stroke-linejoin="round"/><path d="M0.7 0.7 H5 L6.9 2.6 V8.6 H0.7 Z" fill="#fff" stroke="#3d2d7f" stroke-width="1.25" stroke-linejoin="round"/></svg>
<span id="t45" class="t " style="left:756px;top:366.26px;font-size:11px;line-height:16px;color:#1a1a1a;-webkit-text-stroke:0.45px #1a1a1a;letter-spacing:0.171px;">Copy</span>
<svg class="b" style="left:796px;top:367.3px;" width="11.8" height="11.6" viewBox="0 0 11.8 11.6"><path d="M0 1.2 Q0 0.4 0.8 0.4 H8.2 Q9 0.4 9 1.2 V4 H5 V10.4 H0.8 Q0 10.4 0 9.6 Z" fill="#3d2d7f"/><path d="M5.4 3.9 H9.2 L11.2 5.9 V11 H5.4 Z" fill="#fff" stroke="#3d2d7f" stroke-width="1.2" stroke-linejoin="round"/></svg>
<span id="t46" class="t " style="left:813.7px;top:366.26px;font-size:11px;line-height:16px;color:#1a1a1a;-webkit-text-stroke:0.45px #1a1a1a;letter-spacing:-0.010px;">Paste</span>
<div class="b " style="left:857px;top:362px;width:1px;height:24px;background:#dcdcdc"></div>
<svg class="b" style="left:866px;top:367.7px;" width="12" height="11.2" viewBox="0 0 12 11.2"><path d="M6 0 V6" fill="none" stroke="#3d2d7f" stroke-width="2.1"/><path d="M2.2 4.3 H9.8 L6 8.4 Z" fill="#3d2d7f"/><path d="M0.2 10.2 H11.8" stroke="#3d2d7f" stroke-width="1.9"/></svg>
<span id="t47" class="t " style="left:884.3px;top:366.26px;font-size:11px;line-height:16px;color:#1a1a1a;-webkit-text-stroke:0.45px #1a1a1a;letter-spacing:-0.302px;">Excel</span>
<svg class="b" style="left:920px;top:367.8px;" width="11.4" height="11.4" viewBox="0 0 11.6 11.6"><circle cx="5.8" cy="5.8" r="5.7" fill="#a39bc8"/><rect x="4.9" y="4.8" width="1.9" height="4.5" fill="#fff"/><circle cx="5.85" cy="2.9" r="1.1" fill="#fff"/></svg>
<span id="t48" class="t " style="left:937.9px;top:366.26px;font-size:11px;line-height:16px;color:#a0a0a0;letter-spacing:0.246px;">Details</span>
<svg class="b" style="left:983.2px;top:367.6px;" width="11.8" height="11" viewBox="0 0 11.8 11"><path d="M0.6 2 V9.2 H5.6" fill="none" stroke="#b9b2d6" stroke-width="1.2"/><path d="M10 2 V5" fill="none" stroke="#b9b2d6" stroke-width="1.2"/><rect x="0" y="1" width="10.6" height="2.9" fill="#b9b2d6"/><rect x="1.8" y="0" width="1.5" height="2" fill="#b9b2d6"/><rect x="7.2" y="0" width="1.5" height="2" fill="#b9b2d6"/><circle cx="8.6" cy="8" r="2.7" fill="#fff" stroke="#b9b2d6" stroke-width="1.2"/><path d="M8.7 6.8 V8.2 H9.9" fill="none" stroke="#b9b2d6" stroke-width="0.9"/></svg>
<span id="t49" class="t " style="left:1001.6px;top:366.26px;font-size:11px;line-height:16px;color:#a0a0a0;letter-spacing:-0.320px;">Logs</span>
<svg class="b" style="left:1034.3px;top:367.1px;" width="12.4" height="11.8" viewBox="0 0 12.4 11.8"><path d="M9.3 7.2 V11.1 H0.7 V1.7 H6" fill="none" stroke="#3d2d7f" stroke-width="1.25" stroke-linejoin="round"/><path d="M3.4 6.1 L9.3 0.3 Q9.9 -0.2 10.5 0.4 L11.9 1.8 Q12.4 2.4 11.9 2.9 L6.1 8.8 L3.1 9.2 Z" fill="#3d2d7f"/></svg>
<span id="t50" class="t " style="left:1052.4px;top:366.26px;font-size:11px;line-height:16px;color:#1a1a1a;-webkit-text-stroke:0.45px #1a1a1a;letter-spacing:0.177px;">Edit</span>
<div class="b" style="left:479px;top:393px;width:1031px;height:328px;overflow:hidden">
<div class="b" style="left:0px;top:0px;width:1031px;height:21px;background:#f8f8f8"></div>
<div class="b" style="left:0px;top:21px;width:171px;height:300px;background:#f8f8f8"></div>
<div class="b" style="left:171px;top:21px;width:860px;height:300px;background:#fff"></div>
<div class="b" style="left:240px;top:21px;width:1px;height:40px;background:#e4e4e4"></div>
<div class="b" style="left:309px;top:21px;width:1px;height:40px;background:#e4e4e4"></div>
<div class="b" style="left:375px;top:21px;width:1px;height:40px;background:#e4e4e4"></div>
<div class="b" style="left:444px;top:21px;width:1px;height:40px;background:#e4e4e4"></div>
<div class="b" style="left:513px;top:21px;width:1px;height:40px;background:#e4e4e4"></div>
<div class="b" style="left:579px;top:21px;width:1px;height:40px;background:#e4e4e4"></div>
<div class="b" style="left:647px;top:21px;width:1px;height:40px;background:#e4e4e4"></div>
<div class="b" style="left:715px;top:21px;width:1px;height:40px;background:#e4e4e4"></div>
<div class="b" style="left:781px;top:21px;width:1px;height:40px;background:#e4e4e4"></div>
<div class="b" style="left:851px;top:21px;width:1px;height:40px;background:#e4e4e4"></div>
<div class="b" style="left:917px;top:21px;width:1px;height:40px;background:#e4e4e4"></div>
<div class="b" style="left:979px;top:21px;width:1px;height:40px;background:#e4e4e4"></div>
<div class="b" style="left:172px;top:61px;width:859px;height:80px;background:#ffffdc"></div>
<div class="b" style="left:240px;top:61px;width:1px;height:80px;background:#e6e6c9"></div>
<div class="b" style="left:309px;top:61px;width:1px;height:80px;background:#e6e6c9"></div>
<div class="b" style="left:375px;top:61px;width:1px;height:80px;background:#e6e6c9"></div>
<div class="b" style="left:444px;top:61px;width:1px;height:80px;background:#e6e6c9"></div>
<div class="b" style="left:513px;top:61px;width:1px;height:80px;background:#e6e6c9"></div>
<div class="b" style="left:579px;top:61px;width:1px;height:80px;background:#e6e6c9"></div>
<div class="b" style="left:647px;top:61px;width:1px;height:80px;background:#e6e6c9"></div>
<div class="b" style="left:715px;top:61px;width:1px;height:80px;background:#e6e6c9"></div>
<div class="b" style="left:781px;top:61px;width:1px;height:80px;background:#e6e6c9"></div>
<div class="b" style="left:851px;top:61px;width:1px;height:80px;background:#e6e6c9"></div>
<div class="b" style="left:917px;top:61px;width:1px;height:80px;background:#e6e6c9"></div>
<div class="b" style="left:979px;top:61px;width:1px;height:80px;background:#e6e6c9"></div>
<div class="b" style="left:240px;top:141px;width:1px;height:40px;background:#e4e4e4"></div>
<div class="b" style="left:309px;top:141px;width:1px;height:40px;background:#e4e4e4"></div>
<div class="b" style="left:375px;top:141px;width:1px;height:40px;background:#e4e4e4"></div>
<div class="b" style="left:444px;top:141px;width:1px;height:40px;background:#e4e4e4"></div>
<div class="b" style="left:513px;top:141px;width:1px;height:40px;background:#e4e4e4"></div>
<div class="b" style="left:579px;top:141px;width:1px;height:40px;background:#e4e4e4"></div>
<div class="b" style="left:647px;top:141px;width:1px;height:40px;background:#e4e4e4"></div>
<div class="b" style="left:715px;top:141px;width:1px;height:40px;background:#e4e4e4"></div>
<div class="b" style="left:781px;top:141px;width:1px;height:40px;background:#e4e4e4"></div>
<div class="b" style="left:851px;top:141px;width:1px;height:40px;background:#e4e4e4"></div>
<div class="b" style="left:917px;top:141px;width:1px;height:40px;background:#e4e4e4"></div>
<div class="b" style="left:979px;top:141px;width:1px;height:40px;background:#e4e4e4"></div>
<div class="b" style="left:172px;top:181px;width:859px;height:40px;background:#d8d5e6"></div>
<div class="b" style="left:240px;top:181px;width:1px;height:40px;background:#c6c3d7"></div>
<div class="b" style="left:309px;top:181px;width:1px;height:40px;background:#c6c3d7"></div>
<div class="b" style="left:375px;top:181px;width:1px;height:40px;background:#c6c3d7"></div>
<div class="b" style="left:444px;top:181px;width:1px;height:40px;background:#c6c3d7"></div>
<div class="b" style="left:513px;top:181px;width:1px;height:40px;background:#c6c3d7"></div>
<div class="b" style="left:579px;top:181px;width:1px;height:40px;background:#c6c3d7"></div>
<div class="b" style="left:647px;top:181px;width:1px;height:40px;background:#c6c3d7"></div>
<div class="b" style="left:715px;top:181px;width:1px;height:40px;background:#c6c3d7"></div>
<div class="b" style="left:781px;top:181px;width:1px;height:40px;background:#c6c3d7"></div>
<div class="b" style="left:851px;top:181px;width:1px;height:40px;background:#c6c3d7"></div>
<div class="b" style="left:917px;top:181px;width:1px;height:40px;background:#c6c3d7"></div>
<div class="b" style="left:979px;top:181px;width:1px;height:40px;background:#c6c3d7"></div>
<div class="b" style="left:172px;top:221px;width:859px;height:20px;background:#ffffdc"></div>
<div class="b" style="left:240px;top:221px;width:1px;height:20px;background:#e6e6c9"></div>
<div class="b" style="left:309px;top:221px;width:1px;height:20px;background:#e6e6c9"></div>
<div class="b" style="left:375px;top:221px;width:1px;height:20px;background:#e6e6c9"></div>
<div class="b" style="left:444px;top:221px;width:1px;height:20px;background:#e6e6c9"></div>
<div class="b" style="left:513px;top:221px;width:1px;height:20px;background:#e6e6c9"></div>
<div class="b" style="left:579px;top:221px;width:1px;height:20px;background:#e6e6c9"></div>
<div class="b" style="left:647px;top:221px;width:1px;height:20px;background:#e6e6c9"></div>
<div class="b" style="left:715px;top:221px;width:1px;height:20px;background:#e6e6c9"></div>
<div class="b" style="left:781px;top:221px;width:1px;height:20px;background:#e6e6c9"></div>
<div class="b" style="left:851px;top:221px;width:1px;height:20px;background:#e6e6c9"></div>
<div class="b" style="left:917px;top:221px;width:1px;height:20px;background:#e6e6c9"></div>
<div class="b" style="left:979px;top:221px;width:1px;height:20px;background:#e6e6c9"></div>
<div class="b" style="left:172px;top:241px;width:859px;height:80px;background:#d8d5e6"></div>
<div class="b" style="left:240px;top:241px;width:1px;height:80px;background:#c6c3d7"></div>
<div class="b" style="left:309px;top:241px;width:1px;height:80px;background:#c6c3d7"></div>
<div class="b" style="left:375px;top:241px;width:1px;height:80px;background:#c6c3d7"></div>
<div class="b" style="left:444px;top:241px;width:1px;height:80px;background:#c6c3d7"></div>
<div class="b" style="left:513px;top:241px;width:1px;height:80px;background:#c6c3d7"></div>
<div class="b" style="left:579px;top:241px;width:1px;height:80px;background:#c6c3d7"></div>
<div class="b" style="left:647px;top:241px;width:1px;height:80px;background:#c6c3d7"></div>
<div class="b" style="left:715px;top:241px;width:1px;height:80px;background:#c6c3d7"></div>
<div class="b" style="left:781px;top:241px;width:1px;height:80px;background:#c6c3d7"></div>
<div class="b" style="left:851px;top:241px;width:1px;height:80px;background:#c6c3d7"></div>
<div class="b" style="left:917px;top:241px;width:1px;height:80px;background:#c6c3d7"></div>
<div class="b" style="left:979px;top:241px;width:1px;height:80px;background:#c6c3d7"></div>
<div class="b" style="left:240px;top:0px;width:1px;height:21px;background:#dedede"></div>
<div class="b" style="left:309px;top:0px;width:1px;height:21px;background:#dedede"></div>
<div class="b" style="left:375px;top:0px;width:1px;height:21px;background:#dedede"></div>
<div class="b" style="left:444px;top:0px;width:1px;height:21px;background:#dedede"></div>
<div class="b" style="left:513px;top:0px;width:1px;height:21px;background:#dedede"></div>
<div class="b" style="left:579px;top:0px;width:1px;height:21px;background:#dedede"></div>
<div class="b" style="left:647px;top:0px;width:1px;height:21px;background:#dedede"></div>
<div class="b" style="left:715px;top:0px;width:1px;height:21px;background:#dedede"></div>
<div class="b" style="left:781px;top:0px;width:1px;height:21px;background:#dedede"></div>
<div class="b" style="left:851px;top:0px;width:1px;height:21px;background:#dedede"></div>
<div class="b" style="left:917px;top:0px;width:1px;height:21px;background:#dedede"></div>
<div class="b" style="left:979px;top:0px;width:1px;height:21px;background:#dedede"></div>
<div class="b" style="left:170px;top:0px;width:1px;height:321px;background:#dfdfdf"></div>
<div class="b" style="left:0px;top:0px;width:1px;height:321px;background:#dfdfdf"></div>
<div class="b" style="left:0px;top:0px;width:1031px;height:1px;background:#dedede"></div>
<div class="b" style="left:0px;top:40px;width:170px;height:1px;background:#e0e0e0"></div>
<div class="b" style="left:172px;top:40px;width:859px;height:1px;background:#e4e4e4"></div>
<div class="b" style="left:0px;top:60px;width:170px;height:1px;background:#e0e0e0"></div>
<div class="b" style="left:172px;top:60px;width:859px;height:1px;background:#e4e4e4"></div>
<div class="b" style="left:0px;top:80px;width:170px;height:1px;background:#e0e0e0"></div>
<div class="b" style="left:172px;top:80px;width:859px;height:1px;background:#e6e6c9"></div>
<div class="b" style="left:0px;top:100px;width:170px;height:1px;background:#e0e0e0"></div>
<div class="b" style="left:172px;top:100px;width:859px;height:1px;background:#e6e6c9"></div>
<div class="b" style="left:0px;top:120px;width:170px;height:1px;background:#e0e0e0"></div>
<div class="b" style="left:172px;top:120px;width:859px;height:1px;background:#e6e6c9"></div>
<div class="b" style="left:0px;top:140px;width:170px;height:1px;background:#e0e0e0"></div>
<div class="b" style="left:172px;top:140px;width:859px;height:1px;background:#e6e6c9"></div>
<div class="b" style="left:0px;top:160px;width:170px;height:1px;background:#e0e0e0"></div>
<div class="b" style="left:172px;top:160px;width:859px;height:1px;background:#e4e4e4"></div>
<div class="b" style="left:0px;top:180px;width:170px;height:1px;background:#e0e0e0"></div>
<div class="b" style="left:172px;top:180px;width:859px;height:1px;background:#e4e4e4"></div>
<div class="b" style="left:0px;top:200px;width:170px;height:1px;background:#e0e0e0"></div>
<div class="b" style="left:172px;top:200px;width:859px;height:1px;background:#c6c3d7"></div>
<div class="b" style="left:0px;top:220px;width:170px;height:1px;background:#e0e0e0"></div>
<div class="b" style="left:172px;top:220px;width:859px;height:1px;background:#c6c3d7"></div>
<div class="b" style="left:0px;top:240px;width:170px;height:1px;background:#e0e0e0"></div>
<div class="b" style="left:172px;top:240px;width:859px;height:1px;background:#e6e6c9"></div>
<div class="b" style="left:0px;top:260px;width:170px;height:1px;background:#e0e0e0"></div>
<div class="b" style="left:172px;top:260px;width:859px;height:1px;background:#c6c3d7"></div>
<div class="b" style="left:0px;top:280px;width:170px;height:1px;background:#e0e0e0"></div>
<div class="b" style="left:172px;top:280px;width:859px;height:1px;background:#c6c3d7"></div>
<div class="b" style="left:0px;top:300px;width:170px;height:1px;background:#e0e0e0"></div>
<div class="b" style="left:172px;top:300px;width:859px;height:1px;background:#c6c3d7"></div>
<div class="b" style="left:0px;top:320px;width:170px;height:1px;background:#e0e0e0"></div>
<div class="b" style="left:172px;top:320px;width:859px;height:1px;background:#c6c3d7"></div>
</div>
<div class="b " style="left:479px;top:393px;width:171px;height:21px;border:2px solid #bab5d6;border-top-color:#a8a2ca;border-bottom-color:#c0bbdb;background:#f8f8f8"></div>
<div class="b " style="left:479px;top:403.5px;width:1px;height:5.6px;background:#5d88d6"></div>
<div class="b " style="left:479px;top:414px;width:171px;height:1px;background:#a6a6a6"></div>
<div class="b " style="left:650px;top:414px;width:860px;height:1px;background:#c4c4c4"></div>
<div class="b " style="left:650px;top:415px;width:860px;height:1px;background:rgba(0,0,0,0.06)"></div>
<div class="b" style="left:479px;top:393px;width:170px;height:328px;overflow:hidden">
<span class="t" style="left:6.4px;top:24.03px;font-size:12px;line-height:18px;color:#000">Calculated Forecast</span>
<span class="t" style="left:6.4px;top:44.03px;font-size:12px;line-height:18px;color:#000">Linked Forecast</span>
<span class="t" style="left:6.4px;top:64.03px;font-size:12px;line-height:18px;color:#000">Promotion</span>
<span class="t" style="left:6.4px;top:84.03px;font-size:12px;line-height:18px;color:#000">Adjusted Forecast</span>
<span class="t" style="left:6.4px;top:104.03px;font-size:12px;line-height:18px;color:#000">Saved Adjustment</span>
<span class="t" style="left:6.4px;top:124.03px;font-size:12px;line-height:18px;color:#000">Locked Forecast</span>
<span class="t" style="left:6.4px;top:144.03px;font-size:12px;line-height:18px;color:#000">Synchronized Forecast</span>
<span class="t" style="left:6.4px;top:164.03px;font-size:12px;line-height:18px;color:#000">Final Forecast</span>
<span class="t" style="left:6.4px;top:184.03px;font-size:12px;line-height:18px;color:#000">Sales Forecast</span>
<span class="t" style="left:6.4px;top:204.03px;font-size:12px;line-height:18px;color:#000">Demand Planner Forecast</span>
<span class="t" style="left:6.4px;top:224.03px;font-size:12px;line-height:18px;color:#000">Customer Forecast</span>
<span class="t" style="left:6.4px;top:244.03px;font-size:12px;line-height:18px;color:#000">Consensus Forecast</span>
<span class="t" style="left:6.4px;top:264.03px;font-size:12px;line-height:18px;color:#000">Last Month&#x27;s Consensus Fcst</span>
<span class="t" style="left:9.7px;top:284.03px;font-size:12px;line-height:18px;color:#000">2 Months Prior Consensus…</span>
<span class="t" style="left:9.7px;top:304.03px;font-size:12px;line-height:18px;color:#000">3 Months Prior Consensus…</span>
</div>
<div class="b" style="left:650px;top:393px;width:860px;height:328px;overflow:hidden">
<span class="t" style="right:793.3px;top:5.03px;font-size:12px;line-height:18px;color:#111">Aug-2020</span>
<span class="t" style="right:724.3px;top:5.03px;font-size:12px;line-height:18px;color:#111">Sep-2020</span>
<span class="t" style="right:658.3px;top:5.03px;font-size:12px;line-height:18px;color:#111">Oct-2020</span>
<span class="t" style="right:589.3px;top:5.03px;font-size:12px;line-height:18px;color:#111">Nov-2020</span>
<span class="t" style="right:520.3px;top:5.03px;font-size:12px;line-height:18px;color:#111">Dec-2020</span>
<span class="t" style="right:454.3px;top:5.03px;font-size:12px;line-height:18px;color:#111">Jan-2021</span>
<span class="t" style="right:386.3px;top:5.03px;font-size:12px;line-height:18px;color:#111">Feb-2021</span>
<span class="t" style="right:318.3px;top:5.03px;font-size:12px;line-height:18px;color:#111">Mar-2021</span>
<span class="t" style="right:252.3px;top:5.03px;font-size:12px;line-height:18px;color:#111">Apr-2021</span>
<span class="t" style="right:182.3px;top:5.03px;font-size:12px;line-height:18px;color:#111">May-2021</span>
<span class="t" style="right:116.3px;top:5.03px;font-size:12px;line-height:18px;color:#111">Jun-2021</span>
<span class="t" style="right:54.3px;top:5.03px;font-size:12px;line-height:18px;color:#111">Jul-2021</span>
<span class="t" style="right:-14.7px;top:5.03px;font-size:12px;line-height:18px;color:#111">Aug-2021</span>
<span class="t" style="right:793.6px;top:24.03px;font-size:12px;line-height:18px;color:#000">9</span>
<span class="t" style="right:724.6px;top:24.03px;font-size:12px;line-height:18px;color:#000">9</span>
<span class="t" style="right:658.6px;top:24.03px;font-size:12px;line-height:18px;color:#000">9</span>
<span class="t" style="right:589.6px;top:24.03px;font-size:12px;line-height:18px;color:#000">20</span>
<span class="t" style="right:520.6px;top:24.03px;font-size:12px;line-height:18px;color:#000">9</span>
<span class="t" style="right:454.6px;top:24.03px;font-size:12px;line-height:18px;color:#000">9</span>
<span class="t" style="right:386.6px;top:24.03px;font-size:12px;line-height:18px;color:#000">9</span>
<span class="t" style="right:318.6px;top:24.03px;font-size:12px;line-height:18px;color:#000">9</span>
<span class="t" style="right:252.6px;top:24.03px;font-size:12px;line-height:18px;color:#000">9</span>
<span class="t" style="right:182.6px;top:24.03px;font-size:12px;line-height:18px;color:#000">9</span>
<span class="t" style="right:116.6px;top:24.03px;font-size:12px;line-height:18px;color:#000">9</span>
<span class="t" style="right:54.6px;top:24.03px;font-size:12px;line-height:18px;color:#000">9</span>
<span class="t" style="right:589.6px;top:64.03px;font-size:12px;line-height:18px;color:#000">11</span>
<span class="t" style="right:793.6px;top:144.03px;font-size:12px;line-height:18px;color:#4630fa">9</span>
<span class="t" style="right:724.6px;top:144.03px;font-size:12px;line-height:18px;color:#4630fa">9</span>
<span class="t" style="right:658.6px;top:144.03px;font-size:12px;line-height:18px;color:#4630fa">9</span>
<span class="t" style="right:589.6px;top:144.03px;font-size:12px;line-height:18px;color:#4630fa">20</span>
<span class="t" style="right:520.6px;top:144.03px;font-size:12px;line-height:18px;color:#4630fa">9</span>
<span class="t" style="right:454.6px;top:144.03px;font-size:12px;line-height:18px;color:#4630fa">9</span>
<span class="t" style="right:386.6px;top:144.03px;font-size:12px;line-height:18px;color:#4630fa">9</span>
<span class="t" style="right:318.6px;top:144.03px;font-size:12px;line-height:18px;color:#4630fa">9</span>
<span class="t" style="right:252.6px;top:144.03px;font-size:12px;line-height:18px;color:#4630fa">9</span>
<span class="t" style="right:182.6px;top:144.03px;font-size:12px;line-height:18px;color:#4630fa">9</span>
<span class="t" style="right:116.6px;top:144.03px;font-size:12px;line-height:18px;color:#4630fa">9</span>
<span class="t" style="right:54.6px;top:144.03px;font-size:12px;line-height:18px;color:#4630fa">9</span>
<span class="t" style="right:793.6px;top:164.03px;font-size:12px;line-height:18px;color:#000">12</span>
<span class="t" style="right:724.6px;top:164.03px;font-size:12px;line-height:18px;color:#000">12</span>
<span class="t" style="right:658.6px;top:164.03px;font-size:12px;line-height:18px;color:#000">12</span>
<span class="t" style="right:589.6px;top:164.03px;font-size:12px;line-height:18px;color:#000">12</span>
<span class="t" style="right:520.6px;top:164.03px;font-size:12px;line-height:18px;color:#000">12</span>
<span class="t" style="right:454.6px;top:164.03px;font-size:12px;line-height:18px;color:#000">12</span>
<span class="t" style="right:386.6px;top:164.03px;font-size:12px;line-height:18px;color:#000">12</span>
<span class="t" style="right:318.6px;top:164.03px;font-size:12px;line-height:18px;color:#000">12</span>
<span class="t" style="right:252.6px;top:164.03px;font-size:12px;line-height:18px;color:#000">12</span>
<span class="t" style="right:182.6px;top:164.03px;font-size:12px;line-height:18px;color:#000">12</span>
<span class="t" style="right:116.6px;top:164.03px;font-size:12px;line-height:18px;color:#000">12</span>
<span class="t" style="right:54.6px;top:164.03px;font-size:12px;line-height:18px;color:#000">12</span>
<span class="t" style="right:793.6px;top:184.03px;font-size:12px;line-height:18px;color:#000">13</span>
<span class="t" style="right:724.6px;top:184.03px;font-size:12px;line-height:18px;color:#000">13</span>
<span class="t" style="right:658.6px;top:184.03px;font-size:12px;line-height:18px;color:#000">12</span>
<span class="t" style="right:589.6px;top:184.03px;font-size:12px;line-height:18px;color:#000">13</span>
<span class="t" style="right:520.6px;top:184.03px;font-size:12px;line-height:18px;color:#000">12</span>
<span class="t" style="right:454.6px;top:184.03px;font-size:12px;line-height:18px;color:#000">12</span>
<span class="t" style="right:386.6px;top:184.03px;font-size:12px;line-height:18px;color:#000">14</span>
<span class="t" style="right:318.6px;top:184.03px;font-size:12px;line-height:18px;color:#000">14</span>
<span class="t" style="right:252.6px;top:184.03px;font-size:12px;line-height:18px;color:#000">12</span>
<span class="t" style="right:182.6px;top:184.03px;font-size:12px;line-height:18px;color:#000">13</span>
<span class="t" style="right:116.6px;top:184.03px;font-size:12px;line-height:18px;color:#000">12</span>
<span class="t" style="right:54.6px;top:184.03px;font-size:12px;line-height:18px;color:#000">12</span>
<span class="t" style="right:793.6px;top:204.03px;font-size:12px;line-height:18px;color:#000">12</span>
<span class="t" style="right:724.6px;top:204.03px;font-size:12px;line-height:18px;color:#000">12</span>
<span class="t" style="right:658.6px;top:204.03px;font-size:12px;line-height:18px;color:#000">12</span>
<span class="t" style="right:589.6px;top:204.03px;font-size:12px;line-height:18px;color:#000">12</span>
<span class="t" style="right:520.6px;top:204.03px;font-size:12px;line-height:18px;color:#000">12</span>
<span class="t" style="right:454.6px;top:204.03px;font-size:12px;line-height:18px;color:#000">12</span>
<span class="t" style="right:386.6px;top:204.03px;font-size:12px;line-height:18px;color:#000">12</span>
<span class="t" style="right:318.6px;top:204.03px;font-size:12px;line-height:18px;color:#000">12</span>
<span class="t" style="right:252.6px;top:204.03px;font-size:12px;line-height:18px;color:#000">12</span>
<span class="t" style="right:182.6px;top:204.03px;font-size:12px;line-height:18px;color:#000">12</span>
<span class="t" style="right:116.6px;top:204.03px;font-size:12px;line-height:18px;color:#000">12</span>
<span class="t" style="right:54.6px;top:204.03px;font-size:12px;line-height:18px;color:#000">12</span>
<span class="t" style="right:793.6px;top:224.03px;font-size:12px;line-height:18px;color:#000">0</span>
<span class="t" style="right:724.6px;top:224.03px;font-size:12px;line-height:18px;color:#000">0</span>
<span class="t" style="right:658.6px;top:224.03px;font-size:12px;line-height:18px;color:#000">0</span>
<span class="t" style="right:589.6px;top:224.03px;font-size:12px;line-height:18px;color:#000">0</span>
<span class="t" style="right:520.6px;top:224.03px;font-size:12px;line-height:18px;color:#000">0</span>
<span class="t" style="right:454.6px;top:224.03px;font-size:12px;line-height:18px;color:#000">0</span>
<span class="t" style="right:386.6px;top:224.03px;font-size:12px;line-height:18px;color:#000">0</span>
<span class="t" style="right:318.6px;top:224.03px;font-size:12px;line-height:18px;color:#000">0</span>
<span class="t" style="right:252.6px;top:224.03px;font-size:12px;line-height:18px;color:#000">0</span>
<span class="t" style="right:182.6px;top:224.03px;font-size:12px;line-height:18px;color:#000">0</span>
<span class="t" style="right:116.6px;top:224.03px;font-size:12px;line-height:18px;color:#000">0</span>
<span class="t" style="right:54.6px;top:224.03px;font-size:12px;line-height:18px;color:#000">0</span>
<span class="t" style="right:793.6px;top:244.03px;font-size:12px;line-height:18px;color:#000">12</span>
<span class="t" style="right:724.6px;top:244.03px;font-size:12px;line-height:18px;color:#000">12</span>
<span class="t" style="right:658.6px;top:244.03px;font-size:12px;line-height:18px;color:#000">12</span>
<span class="t" style="right:589.6px;top:244.03px;font-size:12px;line-height:18px;color:#000">12</span>
<span class="t" style="right:520.6px;top:244.03px;font-size:12px;line-height:18px;color:#000">12</span>
<span class="t" style="right:454.6px;top:244.03px;font-size:12px;line-height:18px;color:#000">12</span>
<span class="t" style="right:386.6px;top:244.03px;font-size:12px;line-height:18px;color:#000">12</span>
<span class="t" style="right:318.6px;top:244.03px;font-size:12px;line-height:18px;color:#000">12</span>
<span class="t" style="right:252.6px;top:244.03px;font-size:12px;line-height:18px;color:#000">12</span>
<span class="t" style="right:182.6px;top:244.03px;font-size:12px;line-height:18px;color:#000">12</span>
<span class="t" style="right:116.6px;top:244.03px;font-size:12px;line-height:18px;color:#000">12</span>
<span class="t" style="right:54.6px;top:244.03px;font-size:12px;line-height:18px;color:#000">12</span>
<span class="t" style="right:793.6px;top:264.03px;font-size:12px;line-height:18px;color:#000">9</span>
<span class="t" style="right:724.6px;top:264.03px;font-size:12px;line-height:18px;color:#000">9</span>
<span class="t" style="right:658.6px;top:264.03px;font-size:12px;line-height:18px;color:#000">9</span>
<span class="t" style="right:589.6px;top:264.03px;font-size:12px;line-height:18px;color:#000">9</span>
<span class="t" style="right:520.6px;top:264.03px;font-size:12px;line-height:18px;color:#000">9</span>
<span class="t" style="right:454.6px;top:264.03px;font-size:12px;line-height:18px;color:#000">9</span>
<span class="t" style="right:386.6px;top:264.03px;font-size:12px;line-height:18px;color:#000">9</span>
<span class="t" style="right:318.6px;top:264.03px;font-size:12px;line-height:18px;color:#000">9</span>
<span class="t" style="right:252.6px;top:264.03px;font-size:12px;line-height:18px;color:#000">9</span>
<span class="t" style="right:182.6px;top:264.03px;font-size:12px;line-height:18px;color:#000">9</span>
<span class="t" style="right:116.6px;top:264.03px;font-size:12px;line-height:18px;color:#000">9</span>
<span class="t" style="right:54.6px;top:264.03px;font-size:12px;line-height:18px;color:#000">9</span>
<span class="t" style="right:793.6px;top:284.03px;font-size:12px;line-height:18px;color:#000">9</span>
<span class="t" style="right:724.6px;top:284.03px;font-size:12px;line-height:18px;color:#000">9</span>
<span class="t" style="right:658.6px;top:284.03px;font-size:12px;line-height:18px;color:#000">9</span>
<span class="t" style="right:589.6px;top:284.03px;font-size:12px;line-height:18px;color:#000">9</span>
<span class="t" style="right:520.6px;top:284.03px;font-size:12px;line-height:18px;color:#000">9</span>
<span class="t" style="right:454.6px;top:284.03px;font-size:12px;line-height:18px;color:#000">9</span>
<span class="t" style="right:386.6px;top:284.03px;font-size:12px;line-height:18px;color:#000">9</span>
<span class="t" style="right:318.6px;top:284.03px;font-size:12px;line-height:18px;color:#000">9</span>
<span class="t" style="right:252.6px;top:284.03px;font-size:12px;line-height:18px;color:#000">9</span>
<span class="t" style="right:182.6px;top:284.03px;font-size:12px;line-height:18px;color:#000">9</span>
<span class="t" style="right:116.6px;top:284.03px;font-size:12px;line-height:18px;color:#000">9</span>
<span class="t" style="right:54.6px;top:284.03px;font-size:12px;line-height:18px;color:#000">9</span>
<span class="t" style="right:793.6px;top:304.03px;font-size:12px;line-height:18px;color:#000">9</span>
<span class="t" style="right:724.6px;top:304.03px;font-size:12px;line-height:18px;color:#000">9</span>
<span class="t" style="right:658.6px;top:304.03px;font-size:12px;line-height:18px;color:#000">9</span>
<span class="t" style="right:589.6px;top:304.03px;font-size:12px;line-height:18px;color:#000">9</span>
<span class="t" style="right:520.6px;top:304.03px;font-size:12px;line-height:18px;color:#000">9</span>
<span class="t" style="right:454.6px;top:304.03px;font-size:12px;line-height:18px;color:#000">9</span>
<span class="t" style="right:386.6px;top:304.03px;font-size:12px;line-height:18px;color:#000">9</span>
<span class="t" style="right:318.6px;top:304.03px;font-size:12px;line-height:18px;color:#000">9</span>
<span class="t" style="right:252.6px;top:304.03px;font-size:12px;line-height:18px;color:#000">9</span>
<span class="t" style="right:182.6px;top:304.03px;font-size:12px;line-height:18px;color:#000">9</span>
<span class="t" style="right:116.6px;top:304.03px;font-size:12px;line-height:18px;color:#000">9</span>
<span class="t" style="right:54.6px;top:304.03px;font-size:12px;line-height:18px;color:#000">9</span>
</div>
</body></html>
